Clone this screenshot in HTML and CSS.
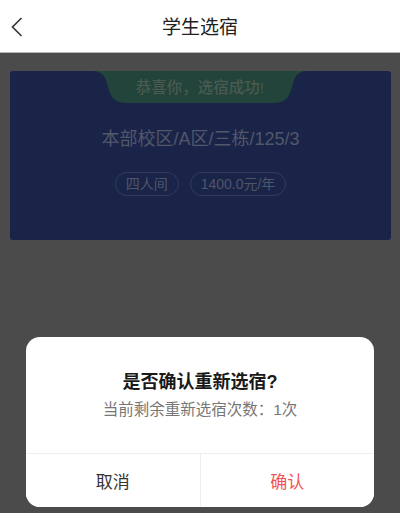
FILE: index.html
```html
<!DOCTYPE html>
<html lang="zh">
<head>
<meta charset="utf-8">
<link rel="stylesheet" href="styles.css">
</head>
<body>
<header class="nav">
  <span class="back">
    <svg width="14" height="22" viewBox="0 0 14 22"><path d="M11.5 2 L2.5 11 L11.5 20" fill="none" stroke="#333" stroke-width="1.6"/></svg>
  </span>
  <h1 class="nav-title">学生选宿</h1>
</header>
<main class="content">
  <section class="card">
    <div class="tab">
      <svg class="tab-bg" width="214" height="32" viewBox="0 0 214 32"><path d="M0 0 H214 C203 0 201 8 199 16 C196 27 192 32 180 32 H34 C22 32 18 27 15 16 C13 8 11 0 0 0 Z" fill="#22443a"/></svg>
      <span class="tab-text">恭喜你，选宿成功!</span>
    </div>
    <div class="room">本部校区/A区/三栋/125/3</div>
    <div class="tags">
      <span class="tag">四人间</span>
      <span class="tag">1400.0元/年</span>
    </div>
  </section>
</main>
<div class="dialog">
  <div class="dialog-body">
    <div class="dialog-title">是否确认重新选宿?</div>
    <div class="dialog-sub">当前剩余重新选宿次数：1次</div>
  </div>
  <div class="dialog-actions">
    <button class="btn btn-cancel">取消</button>
    <button class="btn btn-ok">确认</button>
  </div>
</div>
</body>
</html>
```
FILE: styles.css
```css
html, body {
  margin: 0;
  padding: 0;
}
body {
  width: 400px;
  height: 513px;
  background: #4b4b4b;
  font-family: "Liberation Sans", "Noto Sans CJK SC", sans-serif;
  overflow: hidden;
  position: relative;
}
.nav {
  height: 52px;
  background: #fff;
  border-bottom: 1px solid #b5b5b5;
  display: flex;
  align-items: center;
  justify-content: center;
  position: relative;
}
.back {
  position: absolute;
  left: 10px;
  top: 16px;
  display: flex;
}
.nav-title {
  margin: 0;
  padding-top: 4px;
  font-size: 19px;
  font-weight: 400;
  color: #222;
  line-height: 26px;
}
.content {
  padding: 18px 9px 0 10px;
}
.card {
  height: 169px;
  background: #1a2449;
  border-radius: 3px;
  display: flex;
  flex-direction: column;
  align-items: center;
}
.tab {
  width: 214px;
  height: 32px;
  position: relative;
  display: flex;
  align-items: center;
  justify-content: center;
  margin-left: -1px;
}
.tab-bg {
  position: absolute;
  left: 0;
  top: 0;
}
.tab-text {
  position: relative;
  font-size: 15.5px;
  color: #4a5a50;
  line-height: 20px;
  font-weight: 500;
  padding-top: 2px;
}
.room {
  margin-top: 23px;
  font-size: 18px;
  line-height: 26px;
  color: #525769;
}
.tags {
  margin-top: 20px;
  display: flex;
  gap: 11px;
}
.tag {
  height: 22px;
  line-height: 22px;
  padding: 0 10px;
  border: 1px solid #343c5b;
  border-radius: 12px;
  font-size: 14px;
  color: #4f5568;
}
.dialog {
  position: absolute;
  left: 26px;
  top: 337px;
  width: 348px;
  height: 170px;
  background: #fff;
  border-radius: 14px;
  display: flex;
  flex-direction: column;
  overflow: hidden;
}
.dialog-body {
  height: 116px;
  display: flex;
  flex-direction: column;
  align-items: center;
}
.dialog-title {
  margin-top: 32px;
  font-size: 18px;
  line-height: 26px;
  font-weight: 700;
  color: #1a1a1a;
}
.dialog-sub {
  margin-top: 4px;
  font-size: 15.5px;
  line-height: 22px;
  color: #777;
}
.dialog-actions {
  flex: 1;
  display: flex;
  border-top: 1px solid #efefef;
}
.btn {
  flex: 1;
  border: 0;
  background: #fff;
  font-family: inherit;
  font-size: 17px;
  padding: 0;
  margin: 0;
}
.btn-cancel {
  color: #333;
  border-right: 1px solid #efefef;
}
.btn-ok {
  color: #f05555;
}
```
